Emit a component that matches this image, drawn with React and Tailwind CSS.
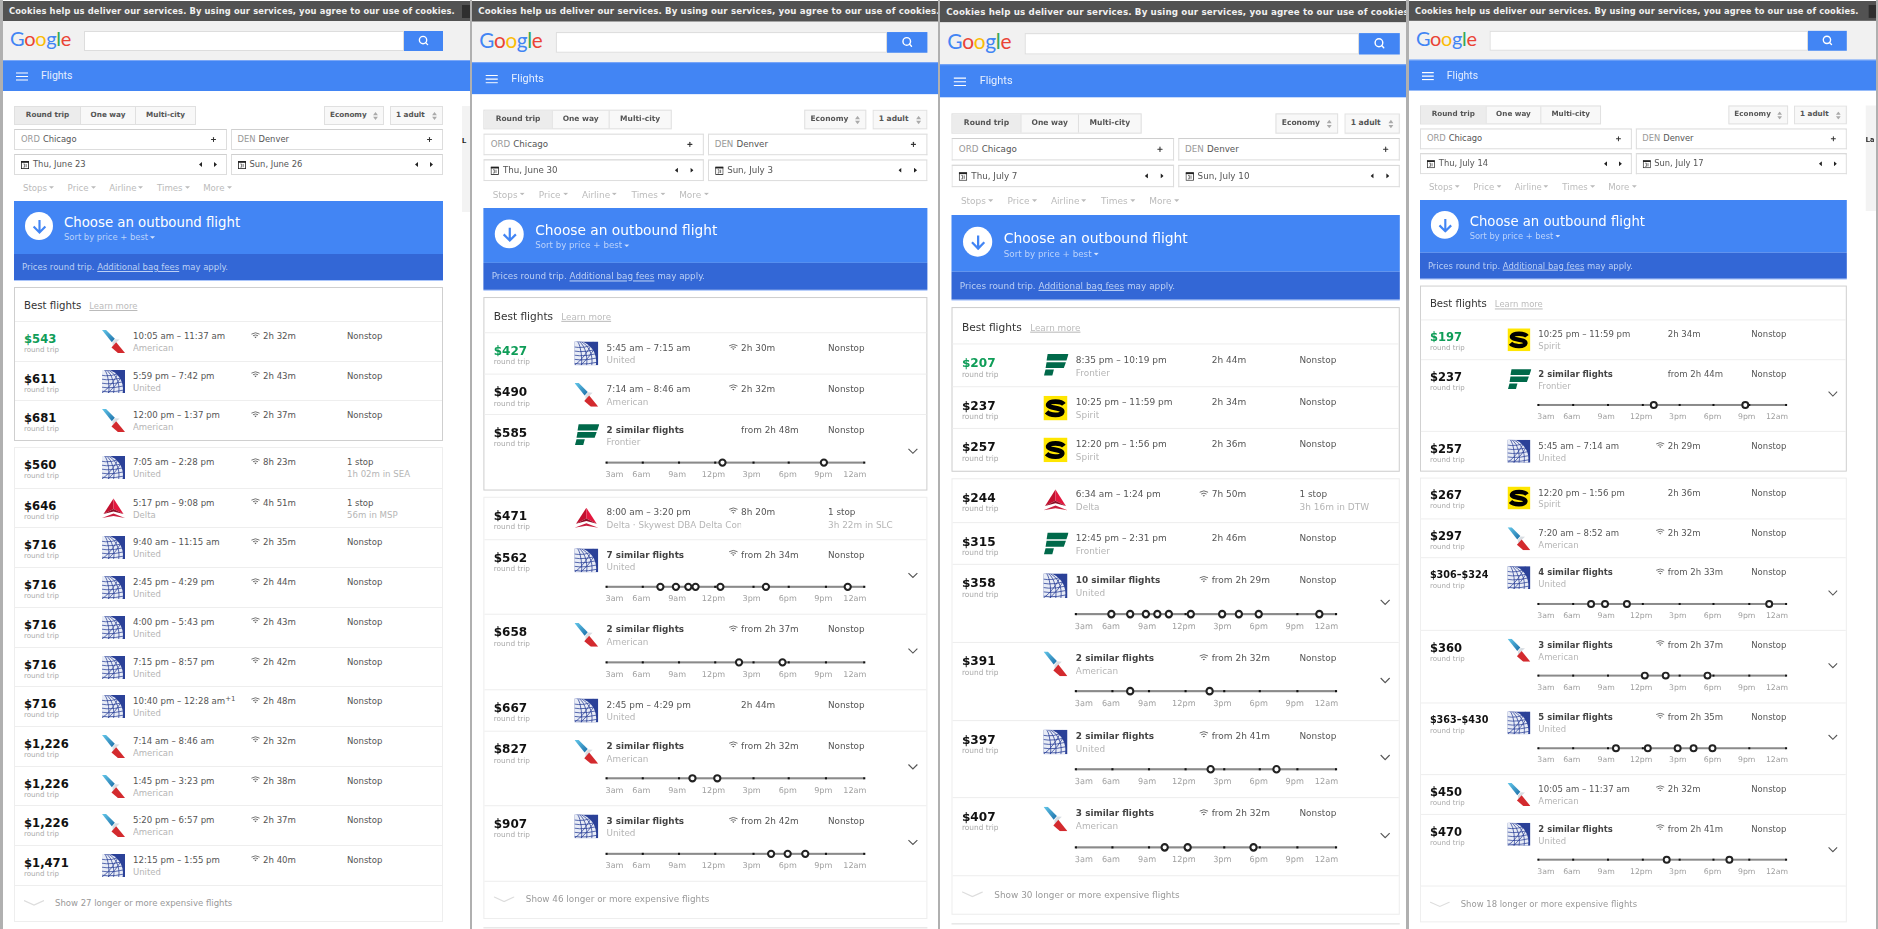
import { Plus, Search } from 'lucide-react';

const HOURS = ['3am', '6am', '9am', '12pm', '3pm', '6pm', '9pm', '12am'];
const TICKS = [0, 14.1, 28.1, 42, 57, 70.8, 85, 100];
const LABEL_POS = [0, 13.5, 27.4, 41.5, 56.3, 70.3, 84.1, 100];

// price, airline, times, wifi, duration, stop info
const one = (price, air, time, wifi, dur, stops = 'Nonstop', via = '') => ({ price, air, time, wifi, dur, stops, via });
// price, airline, count of similar flights, wifi, duration, timeline dots in %
const many = (price, air, count, wifi, dur, dots) => ({ price, air, count, wifi, dur, dots, stops: 'Nonstop' });

const panels = [
  {
    outer: 'w-[467px] mr-[2px]',
    inner: 'w-[467px]',
    peek: 'L',
    dep: 'Thu, June 23',
    ret: 'Sun, June 26',
    more: 27,
    best: [
      one('$543', 'American', '10:05 am – 11:37 am', true, '2h 32m'),
      one('$611', 'United', '5:59 pm – 7:42 pm', true, '2h 43m'),
      one('$681', 'American', '12:00 pm – 1:37 pm', true, '2h 37m'),
    ],
    rest: [
      one('$560', 'United', '7:05 am – 2:28 pm', true, '8h 23m', '1 stop', '1h 02m in SEA'),
      one('$646', 'Delta', '5:17 pm – 9:08 pm', true, '4h 51m', '1 stop', '56m in MSP'),
      one('$716', 'United', '9:40 am – 11:15 am', true, '2h 35m'),
      one('$716', 'United', '2:45 pm – 4:29 pm', true, '2h 44m'),
      one('$716', 'United', '4:00 pm – 5:43 pm', true, '2h 43m'),
      one('$716', 'United', '7:15 pm – 8:57 pm', true, '2h 42m'),
      { ...one('$716', 'United', '10:40 pm – 12:28 am', true, '2h 48m'), plus: true },
      one('$1,226', 'American', '7:14 am – 8:46 am', true, '2h 32m'),
      one('$1,226', 'American', '1:45 pm – 3:23 pm', true, '2h 38m'),
      one('$1,226', 'American', '5:20 pm – 6:57 pm', true, '2h 37m'),
      one('$1,471', 'United', '12:15 pm – 1:55 pm', true, '2h 40m'),
    ],
  },
  {
    outer: 'w-[466px] mr-[2px]',
    inner: 'w-[467px] origin-top-left [transform:scale(1.035)]',
    dep: 'Thu, June 30',
    ret: 'Sun, July 3',
    more: 46,
    best: [
      one('$427', 'United', '5:45 am – 7:15 am', true, '2h 30m'),
      one('$490', 'American', '7:14 am – 8:46 am', true, '2h 32m'),
      many('$585', 'Frontier', 2, false, '2h 48m', [45.1, 84.5]),
    ],
    rest: [
      { ...one('$471', 'Delta', '8:00 am – 3:20 pm', true, '8h 20m', '1 stop', '3h 22m in SLC'), sub: 'Delta · Skywest DBA Delta Connection' },
      many('$562', 'United', 7, true, '2h 34m', [20.8, 26.9, 31.8, 34.4, 44.2, 62, 93.5]),
      many('$658', 'American', 2, true, '2h 37m', [51.4, 68.3]),
      one('$667', 'United', '2:45 pm – 4:29 pm', false, '2h 44m'),
      many('$827', 'American', 2, true, '2h 32m', [33.5, 42.8]),
      many('$907', 'United', 3, true, '2h 42m', [63.7, 70.2, 77.2]),
    ],
  },
  {
    outer: 'w-[466px] mr-[3px]',
    inner: 'w-[467px] origin-top-left [transform:scale(1.045,1.07)]',
    dep: 'Thu, July 7',
    ret: 'Sun, July 10',
    more: 30,
    best: [
      one('$207', 'Frontier', '8:35 pm – 10:19 pm', false, '2h 44m'),
      one('$237', 'Spirit', '10:25 pm – 11:59 pm', false, '2h 34m'),
      one('$257', 'Spirit', '12:20 pm – 1:56 pm', false, '2h 36m'),
    ],
    rest: [
      one('$244', 'Delta', '6:34 am – 1:24 pm', true, '7h 50m', '1 stop', '3h 16m in DTW'),
      one('$315', 'Frontier', '12:45 pm – 2:31 pm', false, '2h 46m'),
      many('$358', 'United', 10, true, '2h 29m', [13.6, 21, 26.9, 31.3, 35.7, 44.3, 56.2, 62.8, 70.4, 93.5]),
      many('$391', 'American', 2, true, '2h 32m', [21, 51.5]),
      many('$397', 'United', 2, true, '2h 41m', [51.7, 77.3]),
      many('$407', 'American', 3, true, '2h 32m', [34, 43, 68.4]),
    ],
  },
  {
    outer: 'w-[467px]',
    inner: 'w-[470px] origin-top-left [transform:scale(0.995)]',
    peek: 'La',
    dep: 'Thu, July 14',
    ret: 'Sun, July 17',
    more: 18,
    best: [
      one('$197', 'Spirit', '10:25 pm – 11:59 pm', false, '2h 34m'),
      many('$237', 'Frontier', 2, false, '2h 44m', [46.7, 83.6]),
      one('$257', 'United', '5:45 am – 7:14 am', true, '2h 29m'),
    ],
    rest: [
      one('$267', 'Spirit', '12:20 pm – 1:56 pm', false, '2h 36m'),
      one('$297', 'American', '7:20 am – 8:52 am', true, '2h 32m'),
      many('$306–$324', 'United', 4, true, '2h 33m', [21.1, 26.8, 35.6, 93.3]),
      many('$360', 'American', 3, true, '2h 37m', [43, 51.4, 68.3]),
      many('$363–$430', 'United', 5, true, '2h 35m', [31.3, 44.3, 56.1, 62.7, 70.3]),
      one('$450', 'American', '10:05 am – 11:37 am', true, '2h 32m'),
      many('$470', 'United', 2, true, '2h 41m', [51.7, 77.3]),
    ],
  },
];

const AmericanLogo = () => (
  <svg viewBox="0 0 68 68" className="w-[23px] h-[23px]">
    <defs>
      <linearGradient id="aa-blue" x1="0" y1="0" x2="1" y2="1">
        <stop offset="0" stopColor="#63c8ea" />
        <stop offset="1" stopColor="#1b6ea8" />
      </linearGradient>
    </defs>
    <polygon points="0,0 12,0 38,26 29,36" fill="url(#aa-blue)" />
    <polygon points="31,37 39,27 52,28 41,38 32,50" fill="#d8dde2" />
    <polygon points="28,52 42,36 68,68 47,68" fill="#d32a2e" />
  </svg>
);

const UnitedLogo = () => (
  <svg viewBox="0 0 23 23" className="w-[23px] h-[23px]">
    <rect width="23" height="23" fill="#2b4198" />
    <clipPath id="ua-square"><rect width="23" height="23" /></clipPath>
    <g clipPath="url(#ua-square)">
      <circle cx="1" cy="19" r="20" fill="#e8ecf6" />
      <g fill="none" stroke="#2b4198" strokeWidth="0.75">
        <ellipse cx="1" cy="19" rx="6" ry="20" />
        <ellipse cx="1" cy="19" rx="11" ry="20" />
        <ellipse cx="1" cy="19" rx="16" ry="20" />
        <path d="M-10 3 Q5 8 15 4" />
        <path d="M-10 7 Q5 12 19 8" />
        <path d="M-10 11 Q5 16 20 12" />
        <path d="M-10 15 Q5 20 21 16" />
        <path d="M-10 19 Q5 24 22 20" />
        <path d="M0 23 Q10 16 18 0" />
        <path d="M6 23 Q14 16 20 6" />
      </g>
    </g>
  </svg>
);

const DeltaLogo = () => (
  <svg viewBox="0 0 23 23" className="w-[23px] h-[23px]">
    <polygon points="11.5,1.5 1.5,17 11.5,12" fill="#c2102f" />
    <polygon points="11.5,1.5 21.5,17 11.5,12" fill="#e3173e" />
    <polygon points="1.5,17 11.5,12 21.5,17 11.5,14.5" fill="#8e0e26" />
    <polygon points="0,21 11.5,16.5 23,21 11.5,19" fill="#c9203f" />
  </svg>
);

const FrontierLogo = () => (
  <svg viewBox="0 0 24 23" className="w-[24px] h-[23px] -ml-[0.5px]">
    <polygon points="4,1 24,1 22,7 3,7" fill="#00694a" />
    <polygon points="3,8.5 21.5,8.5 19.5,14 2,14" fill="#00694a" />
    <polygon points="2,15.5 10,15.5 8.5,21 0.5,21" fill="#00694a" />
  </svg>
);

const SpiritLogo = () => (
  <svg viewBox="0 0 23 23" className="w-[23px] h-[23px]">
    <rect width="23" height="23" fill="#ffe600" />
    <path d="M19.5 8 C17 4.5 6 4.5 4.5 8 C3.5 12 18.5 10.5 18 15 C17 19 6 18.5 3 15" fill="none" stroke="#000" strokeWidth="4.4" />
  </svg>
);

const logos = { American: AmericanLogo, United: UnitedLogo, Delta: DeltaLogo, Frontier: FrontierLogo, Spirit: SpiritLogo };

const Caret = ({ className = 'text-[#bbb]' }) => (
  <svg viewBox="0 0 6 3" className={`w-[5px] h-[3px] ${className}`}>
    <polygon points="0,0 6,0 3,3" fill="currentColor" />
  </svg>
);

const Spinner = () => (
  <svg viewBox="0 0 6 10" className="w-[5px] h-[8px] text-[#aaa]">
    <polygon points="3,0 6,4 0,4" fill="currentColor" />
    <polygon points="3,10 6,6 0,6" fill="currentColor" />
  </svg>
);

const Wifi = () => (
  <svg viewBox="0 0 10 7" className="absolute -left-[12px] top-[-0.5px] w-[9px] h-[7px] mt-[10px]">
    <g fill="none" stroke="#555" strokeWidth="0.9">
      <path d="M0.5 2 Q5 -1 9.5 2" />
      <path d="M2.2 3.8 Q5 2 7.8 3.8" />
    </g>
    <polygon points="3.7,5 6.3,5 5,6.6" fill="#555" />
  </svg>
);

const CalendarIcon = () => (
  <svg viewBox="0 0 8 8" className="w-[8px] h-[8px]">
    <rect x="0.4" y="0.4" width="7.2" height="7.2" fill="#fff" stroke="#222" strokeWidth="0.8" />
    <rect x="0" y="0" width="8" height="1.8" fill="#222" />
    <path d="M2.4 3 H3.6 V6.2 H2.4 M5.2 3 V6.2" fill="none" stroke="#444" strokeWidth="0.7" />
  </svg>
);

const Arrows = () => (
  <div className="flex gap-[12px] mr-[9px]">
    <svg viewBox="0 0 3 5" className="w-[3px] h-[5px]"><polygon points="3,0 3,5 0,2.5" fill="#222" /></svg>
    <svg viewBox="0 0 3 5" className="w-[3px] h-[5px]"><polygon points="0,0 0,5 3,2.5" fill="#222" /></svg>
  </div>
);

const Chevron = () => (
  <svg viewBox="0 0 10 6" className="w-[10px] h-[6px]">
    <path d="M0.7 0.7 L5 5 L9.3 0.7" fill="none" stroke="#555" strokeWidth="1.1" />
  </svg>
);

const Timeline = ({ dots }) => (
  <div className="w-[249px] pt-[12.4px]">
    <div className="relative h-[2px] bg-[#8a8a8a]">
      {TICKS.map((t) => (
        <span key={t} className="absolute top-0 w-[2px] h-[2px] -ml-[1px] bg-[#111]" style={{ left: `${t}%` }} />
      ))}
      {dots.map((d) => (
        <span key={d} className="absolute -top-[3px] w-[8px] h-[8px] -ml-[4px] rounded-full bg-white border-2 border-[#222]" style={{ left: `${d}%` }} />
      ))}
    </div>
    <div className="relative h-[10px] mt-[6px] text-[7.8px] leading-[10px] text-[#a0a0a0]">
      {HOURS.map((h, i) => {
        if (i === 0) return <span key={h} className="absolute left-[-1px]">{h}</span>;
        if (i === 7) return <span key={h} className="absolute right-[-2px]">{h}</span>;
        return <span key={h} className="absolute -translate-x-1/2" style={{ left: `${LABEL_POS[i]}%` }}>{h}</span>;
      })}
    </div>
  </div>
);

const FlightRow = ({ f, green }) => {
  const Logo = logos[f.air];
  const isRange = f.price.includes('–');
  return (
    <div className={`grid grid-cols-[78px_31px_130px_84px_66px_31px] grid-rows-[32px_auto] pl-[9px] border-t border-[#eeeeee] ${f.count ? 'h-[72.6px]' : 'h-[39.7px]'}`}>
      <div className="pt-[10px]">
        <div className={`font-bold leading-[14px] ${isRange ? 'text-[9.7px]' : 'text-[11.6px]'} ${green ? 'text-[#0f9d58]' : 'text-[#111]'}`}>{f.price}</div>
        <div className="text-[7.1px] leading-[7px] text-[#aaa]">round trip</div>
      </div>
      <div className="pt-[8px]"><Logo /></div>
      <div className="pt-[8px] overflow-hidden whitespace-nowrap">
        {f.count ? (
          <div className="text-[8.5px] leading-[13px] font-bold text-[#444]">{f.count} similar flights</div>
        ) : (
          <div className="text-[8.6px] leading-[13px] text-[#555]">
            {f.time}
            {f.plus && <sup className="text-[7px] leading-none">+1</sup>}
          </div>
        )}
        <div className="text-[8.5px] leading-[11px] text-[#b5b5b5]">{f.sub || f.air}</div>
      </div>
      <div className="relative pt-[8px] text-[8.6px] leading-[13px] text-[#555] whitespace-nowrap">
        {f.wifi && <Wifi />}
        {f.count ? `from ${f.dur}` : f.dur}
      </div>
      <div className="pt-[8px] whitespace-nowrap">
        <div className="text-[8.5px] leading-[13px] text-[#555]">{f.stops}</div>
        {f.via && <div className="text-[8.6px] leading-[11px] text-[#b5b5b5]">{f.via}</div>}
      </div>
      {f.count && (
        <>
          <div className="col-start-6 row-start-1 row-span-2 self-center justify-self-start mb-[2px] pl-[11px]"><Chevron /></div>
          <div className="col-start-3 col-span-3 row-start-2"><Timeline dots={f.dots} /></div>
        </>
      )}
    </div>
  );
};

const Field = ({ children }) => (
  <div className="h-[21px] flex items-center bg-white border border-[#ddd] border-t-[#cfcfcf] text-[8.4px] text-[#555]">{children}</div>
);

const Panel = ({ data }) => (
  <div className={`${data.outer} shrink-0 h-[929px] overflow-hidden bg-white`}>
    <div className={data.inner}>
      {/* Cookie bar */}
      <div className="h-[20px] mt-[1px] pl-[6px] flex items-center justify-between bg-[#525252] overflow-hidden whitespace-nowrap">
        <span className="text-[8.35px] font-bold text-[#f0f0f0] tracking-[0.13px]">Cookies help us deliver our services. By using our services, you agree to our use of cookies.</span>
        <span className="w-[8px] h-[13px] shrink-0 bg-[#2e2e2e] ml-[3px]" />
      </div>
      {/* Search row */}
      <div className="h-[39px] flex items-center pl-[7px] bg-[#f1f1f1]">
        <div className="w-[74px] shrink-0 font-['Lato'] text-[20px] leading-none tracking-[-0.3px] pb-[5px]">
          <span className="text-[#4285f4]">G</span><span className="text-[#ea4335]">o</span><span className="text-[#fbbc05]">o</span><span className="text-[#4285f4]">g</span><span className="text-[#34a853]">l</span><span className="text-[#ea4335]">e</span>
        </div>
        <div className="w-[320px] h-[20px] bg-white border border-[#ddd]" />
        <div className="w-[39px] h-[20px] flex items-center justify-center bg-[#4285f4]">
          <Search className="w-[11px] h-[11px] text-white" strokeWidth={3} />
        </div>
      </div>
      {/* Flights bar */}
      <div className="h-[31px] flex items-center pl-[13px] bg-[#4285f4] border-t border-[#7aa7f7]">
        <svg viewBox="0 0 12 9" className="w-[12px] h-[9px]">
          <path d="M0 1 H12 M0 4.5 H12 M0 8 H12" stroke="#fff" strokeWidth="1.1" />
        </svg>
        <span className="ml-[13px] font-['Roboto'] text-[10.5px] text-[#e6effe]">Flights</span>
      </div>
      <div className="flex">
        <div className="w-[429px] shrink-0 ml-[11px]">
          {/* Trip type */}
          <div className="flex justify-between mt-[15px] h-[19px] text-[7.25px] font-bold text-[#555]">
            <div className="flex border border-[#e0e0e0] bg-[#f8f8f8]">
              <div className="w-[65px] flex items-center justify-center bg-[#ececec]">Round trip</div>
              <div className="w-[55px] flex items-center justify-center border-l border-[#e0e0e0]">One way</div>
              <div className="w-[60px] flex items-center justify-center border-l border-[#e0e0e0]">Multi-city</div>
            </div>
            <div className="flex gap-[6px]">
              <div className="w-[60px] flex items-center justify-between px-[5px] border border-[#e0e0e0] bg-[#f8f8f8]">Economy <Spinner /></div>
              <div className="w-[53px] flex items-center justify-between px-[5px] border border-[#e0e0e0] bg-[#f8f8f8]">1 adult <Spinner /></div>
            </div>
          </div>
          {/* Route and dates */}
          <div className="grid grid-cols-2 gap-[4px] mt-[4px]">
            <Field>
              <span className="pl-[6px] text-[#999]">ORD</span>
              <span className="ml-[3px] flex-1">Chicago</span>
              <Plus className="w-[7px] h-[7px] mr-[9px] text-[#333]" strokeWidth={3.5} />
            </Field>
            <Field>
              <span className="pl-[6px] text-[#999]">DEN</span>
              <span className="ml-[3px] flex-1">Denver</span>
              <Plus className="w-[7px] h-[7px] mr-[9px] text-[#333]" strokeWidth={3.5} />
            </Field>
            <Field>
              <span className="pl-[6px]"><CalendarIcon /></span>
              <span className="ml-[4px] flex-1">{data.dep}</span>
              <Arrows />
            </Field>
            <Field>
              <span className="pl-[6px]"><CalendarIcon /></span>
              <span className="ml-[4px] flex-1">{data.ret}</span>
              <Arrows />
            </Field>
          </div>
          {/* Filters */}
          <div className="h-[26px] flex items-center gap-[13.6px] pl-[9px] text-[8.6px] text-[#bbb]">
            {['Stops', 'Price', 'Airline', 'Times', 'More'].map((name) => (
              <span key={name} className="flex items-center gap-[2px]">{name} <Caret /></span>
            ))}
          </div>
          {/* Outbound banner */}
          <div className="border-b border-[#a9c4fa]">
            <div className="h-[53px] flex items-start pl-[11px] pt-[11px] bg-[#4285f4]">
              <div className="w-[28px] h-[28px] rounded-full bg-white flex items-center justify-center">
                <svg viewBox="0 0 14 14" className="w-[15px] h-[15px]">
                  <path d="M7 1 V12 M1.5 7 L7 12.5 L12.5 7" fill="none" stroke="#4285f4" strokeWidth="2" />
                </svg>
              </div>
              <div className="ml-[11px]">
                <div className="text-[13.3px] leading-[18px] mt-[2px] text-white">Choose an outbound flight</div>
                <div className="flex items-center gap-[2px] text-[8.4px] leading-[12px] -mt-[1px] text-[#bcd3fb]">Sort by price + best <Caret className="text-[#d5e3fd]" /></div>
              </div>
            </div>
            <div className="h-[26px] flex items-center pl-[8px] bg-[#3367d6] text-[8.5px] text-[#bcd0f5]">
              <span>Prices round trip. <span className="underline">Additional bag fees</span> may apply.</span>
            </div>
          </div>
          {/* Best flights */}
          <div className="mt-[6px] border border-[#cfcfcf]">
            <div className="h-[33px] flex items-center pl-[9px] pt-[3px]">
              <span className="text-[10.2px] text-[#333]">Best flights</span>
              <span className="ml-[8px] mt-[1px] text-[8.45px] text-[#bbb] underline">Learn more</span>
            </div>
            {data.best.map((f, i) => <FlightRow key={i} f={f} green={i === 0} />)}
          </div>
          {/* Other flights */}
          <div className="mt-[6px] border border-[#eeeeee] [&>*:first-child]:border-t-0">
            {data.rest.map((f, i) => <FlightRow key={i} f={f} />)}
            <div className="h-[36px] flex items-center pl-[9px] border-t border-[#eeeeee] text-[8.5px] text-[#999]">
              <svg viewBox="0 0 20 6" className="w-[20px] h-[6px] mr-[11px]">
                <path d="M0 0.5 L10 5 L20 0.5" fill="none" stroke="#ddd" strokeWidth="1.2" />
              </svg>
              Show {data.more} longer or more expensive flights
            </div>
          </div>
          <div className="mt-[8px] h-[12px] border-t border-[#ddd]" />
        </div>
        {data.peek && (
          <div className="w-[100px] h-[106px] shrink-0 ml-[19px] mt-[15px] pt-[29px] bg-[#f3f3f3] font-['Roboto'] font-bold text-[8px] text-[#222]">{data.peek}</div>
        )}
      </div>
    </div>
  </div>
);

export default function App() {
  return (
    <div className="flex w-[1878px] h-[929px] overflow-hidden pl-[3px] bg-[#b0b0b0] font-['DejaVu_Sans',sans-serif] [filter:blur(0.35px)]">
      {panels.map((p) => <Panel key={p.dep} data={p} />)}
    </div>
  );
}
